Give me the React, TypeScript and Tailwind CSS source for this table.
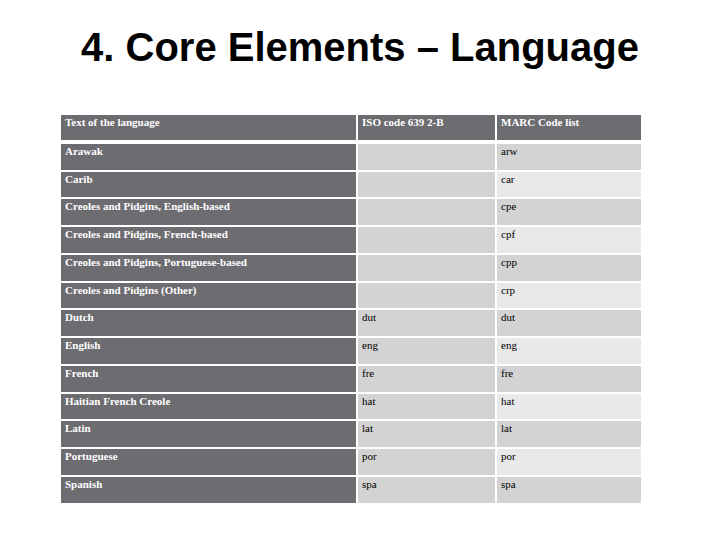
const rows: [string, string, string][] = [
  ["Arawak", "", "arw"],
  ["Carib", "", "car"],
  ["Creoles and Pidgins, English-based", "", "cpe"],
  ["Creoles and Pidgins, French-based", "", "cpf"],
  ["Creoles and Pidgins, Portuguese-based", "", "cpp"],
  ["Creoles and Pidgins (Other)", "", "crp"],
  ["Dutch", "dut", "dut"],
  ["English", "eng", "eng"],
  ["French", "fre", "fre"],
  ["Haitian French Creole", "hat", "hat"],
  ["Latin", "lat", "lat"],
  ["Portuguese", "por", "por"],
  ["Spanish", "spa", "spa"],
];

export default function App() {
  return (
    <div className="w-[720px] h-[540px] bg-white overflow-hidden">
      <h1 className="pt-[27px] text-center text-[40px] leading-none font-bold text-black font-['Liberation_Sans',Arial,sans-serif]">
        4. Core Elements – Language
      </h1>
      <div className="mt-[48px] ml-[61px] grid grid-cols-[295px_137px_144px] gap-x-[2px] font-['Liberation_Serif','Times_New_Roman',serif] text-[11px] leading-[13px]">
        <div className="h-[25px] bg-[#6d6c71] text-white font-bold px-[4px] pt-[1px]">Text of the language</div>
        <div className="h-[25px] bg-[#6d6c71] text-white font-bold px-[4px] pt-[1px]">ISO code 639 2-B</div>
        <div className="h-[25px] bg-[#6d6c71] text-white font-bold px-[4px] pt-[1px]">MARC Code list</div>
        <div className="col-span-3 h-[3.75px]" />
        {rows.map(([name, iso, marc], i) => (
          <div key={name} className="contents">
            <div className="h-[25.75px] mb-[2px] bg-[#6d6c71] text-white font-bold px-[4px] pt-[1px]">{name}</div>
            <div className="h-[25.75px] mb-[2px] bg-[#d3d3d3] text-black px-[4px] pt-[1px]">{iso}</div>
            <div className={`h-[25.75px] mb-[2px] text-black px-[4px] pt-[1px] ${i % 2 === 0 ? "bg-[#d3d3d3]" : "bg-[#e9e9e9]"}`}>{marc}</div>
          </div>
        ))}
      </div>
    </div>
  );
}
